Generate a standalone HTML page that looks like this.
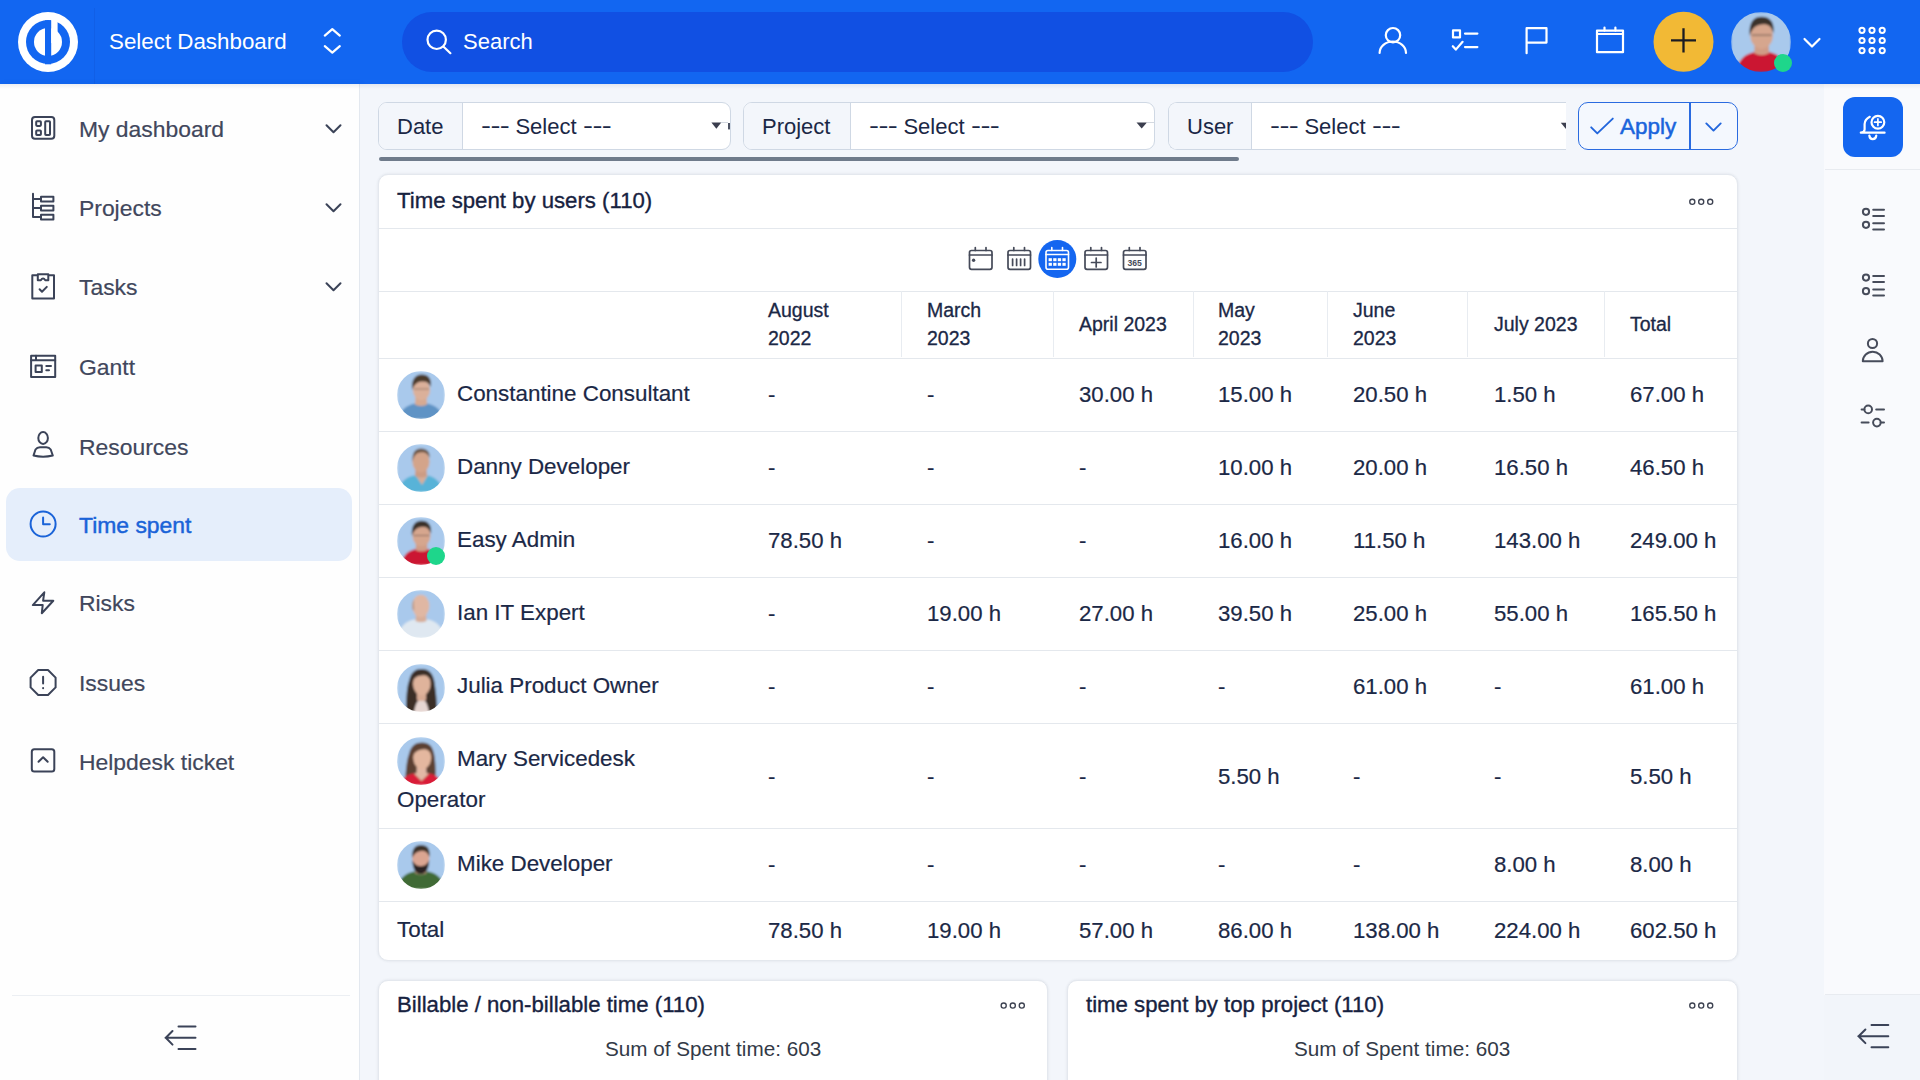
<!DOCTYPE html>
<html><head><meta charset="utf-8">
<style>
*{box-sizing:border-box;margin:0;padding:0}
html,body{width:1920px;height:1080px;overflow:hidden}
body{position:relative;font-family:"Liberation Sans",sans-serif;background:#f3f6fb;color:#1b2846}
.a{position:absolute}
.t{position:absolute;white-space:nowrap}
svg{position:absolute;overflow:visible}
/* header */
#hdr{left:0;top:0;width:1920px;height:84px;background:#1266f1}
/* sidebar */
#side{left:0;top:84px;width:360px;height:996px;background:#fefefe;border-right:1px solid #e3e8ef;box-shadow:2px 0 6px rgba(30,50,90,.07)}
.si{position:absolute;left:79px;font-size:22.9px;line-height:30px;height:30px;color:#41475c;-webkit-text-stroke:.2px #41475c}
#rside{left:1823px;top:84px;width:97px;height:996px;background:#f9fafd;border-left:1px solid #e2e6ed;box-shadow:-2px 0 5px rgba(30,50,90,.06)}
.ic{stroke:#3b4358;fill:none;stroke-width:2;stroke-linecap:round;stroke-linejoin:round}
.wi{stroke:#fff;fill:none;stroke-width:2.2;stroke-linecap:round;stroke-linejoin:round}
.card{position:absolute;background:#fff;border:1px solid #e4e8ee;border-radius:10px;box-shadow:0 0 3px rgba(30,45,70,.10)}
.hl{position:absolute;height:1px;margin-top:1px;background:#e4e8ed}
.th{position:absolute;margin-top:1px;font-size:19.5px;line-height:27.5px;color:#1b2846;-webkit-text-stroke:.3px #1b2846;white-space:nowrap}
.td{position:absolute;margin-top:1px;font-size:22.2px;line-height:30px;height:30px;color:#1b2846;-webkit-text-stroke:.2px #1b2846;white-space:nowrap}
.nm{position:absolute;left:457px;font-size:22.4px;line-height:30px;height:30px;color:#1b2846;-webkit-text-stroke:.2px #1b2846;white-space:nowrap}
.ttl{position:absolute;font-size:22.2px;line-height:30px;height:30px;color:#17223f;-webkit-text-stroke:.35px #17223f;white-space:nowrap}
</style></head><body>

<svg width="0" height="0" style="position:absolute">
<defs>
 <clipPath id="cc"><circle cx="24" cy="24" r="24"/></clipPath>
 <filter id="bl" x="-5%" y="-5%" width="110%" height="110%"><feGaussianBlur stdDeviation=".8"/></filter>
 <symbol id="av-con" viewBox="0 0 48 48"><g clip-path="url(#cc)"><g filter="url(#bl)">
  <rect width="48" height="48" fill="#a9c9ec"/>
  <path d="M2 48 C4 38 10 34 18 32.5 L30 32.5 C38 34 44 38 46 48Z" fill="#5e93c5"/>
  <path d="M18.5 24 L29.5 24 L30 33.5 Q24 36.5 18 33.5Z" fill="#d7aa92"/>
  <ellipse cx="24.5" cy="19" rx="8.6" ry="10.2" fill="#dbb09a"/>
  <path d="M15.2 19 C14 9 18 3.5 24.8 3.5 C31.5 3.5 35 8 33.8 16 C32 11.5 29 10 24.5 10.5 C20 11 17 13.5 15.2 19Z" fill="#4b3a2b"/>
  <path d="M17 18 H32" stroke="#5e4c40" stroke-width="1" opacity=".55"/>
 </g></g></symbol>
 <symbol id="av-dan" viewBox="0 0 48 48"><g clip-path="url(#cc)"><g filter="url(#bl)">
  <rect width="48" height="48" fill="#a9c9ec"/>
  <path d="M1 48 C3 38 9 33 17 31.5 L31 31.5 C38 33 44 38 46 48Z" fill="#58b3d8"/>
  <path d="M18.5 31 L25 41 L31 31Z" fill="#d5ae9a"/>
  <path d="M18.5 24 L29.5 24 L30 32 Q24 35 18 32Z" fill="#cc9c84"/>
  <ellipse cx="24" cy="17.5" rx="8.6" ry="11" fill="#d4a48a"/>
  <path d="M15.5 18 C15 8 18.5 4.5 24 4.5 C30 4.5 33 8 32.8 14 C30 8.5 27 8 23 8.5 C19 9 16.5 12 15.5 18Z" fill="#6a5444"/>
 </g></g></symbol>
 <symbol id="av-adm" viewBox="0 0 48 48"><g clip-path="url(#cc)"><g filter="url(#bl)">
  <rect width="48" height="48" fill="#a9c9ec"/>
  <path d="M4 48 C6 38 11 33.5 19 32 L30 32 C38 33.5 43 38 45 48Z" fill="#cb1430"/>
  <path d="M19 24 L30 24 L30.5 33 Q24.5 36 18.5 33Z" fill="#d09c86"/>
  <ellipse cx="24.5" cy="18.5" rx="9" ry="11" fill="#d6a68e"/>
  <path d="M15 19 C14 8.5 18 3.8 24.5 3.8 C31.5 3.8 35 8.5 34 17 C32 10.5 29 9.5 24.5 10 C20 10.5 16.5 13 15 19Z" fill="#3a302a"/>
  <path d="M16.5 18.5 H32.5" stroke="#504038" stroke-width="1" opacity=".6"/>
 </g></g></symbol>
 <symbol id="av-ian" viewBox="0 0 48 48"><g clip-path="url(#cc)"><g filter="url(#bl)">
  <rect width="48" height="48" fill="#a9c9ec"/>
  <path d="M0 48 C2 37 9 31 17 29.5 L31 29.5 C39 31 46 37 48 48Z" fill="#dfe8f1"/>
  <path d="M19 23 L29 23 L29.5 31 Q24 33.5 18.5 31Z" fill="#d7ae9a"/>
  <ellipse cx="23.8" cy="16" rx="8.6" ry="11.3" fill="#e0b7a3"/>
  <path d="M15.3 19 Q15 12 16.8 9 L17.2 21Z" fill="#b59888"/>
 </g></g></symbol>
 <symbol id="av-jul" viewBox="0 0 48 48"><g clip-path="url(#cc)"><g filter="url(#bl)">
  <rect width="48" height="48" fill="#a9c9ec"/>
  <path d="M9 48 C9 32 10 22 12 17 C14 8 18 5 24.5 5 C32 5 36 9 37.5 18 C39 28 40 36 40 48Z" fill="#3a2d27"/>
  <path d="M17 48 C19 38 21.5 35 24.5 35 C27.5 35 30 38 32 48Z" fill="#e6d6d2"/>
  <path d="M20 26 L29 26 L29 36 Q24.5 38 20 36Z" fill="#d8ab94"/>
  <ellipse cx="24.8" cy="20" rx="8.8" ry="11.2" fill="#dfb39b"/>
  <path d="M15.8 17 C17 9 20 7.5 25 7.5 C31 7.5 33 10 34 17 C31 11.5 28.5 11 24.5 11.5 C20 12 17.5 13.5 15.8 17Z" fill="#3a2d27"/>
 </g></g></symbol>
 <symbol id="av-mar" viewBox="0 0 48 48"><g clip-path="url(#cc)"><g filter="url(#bl)">
  <rect width="48" height="48" fill="#a9c9ec"/>
  <path d="M8 46 C9 30 10 22 12 17 C14 8 19 5.5 25 5.5 C32 5.5 36 9 37.5 19 C39 30 39 38 38 46Z" fill="#5b4133"/>
  <path d="M2 48 C6 40 11 37 17 36.5 L24.5 44 L32 36.5 C38 37 42 40 46 48Z" fill="#d91d37"/>
  <path d="M20 27 L29 27 L29.5 36 L32 36.5 L24.5 44 L17 36.5 L19.5 36Z" fill="#e2b8a5"/>
  <ellipse cx="25.2" cy="20.5" rx="9" ry="11.6" fill="#e4b79f"/>
  <path d="M16 19 C17 10 20 8.5 25.5 8.5 C32 8.5 34 11 35 19 C32 12.5 29 12 25 12.5 C20.5 13 18 15 16 19Z" fill="#5b4133"/>
 </g></g></symbol>
 <symbol id="av-mik" viewBox="0 0 48 48"><g clip-path="url(#cc)"><g filter="url(#bl)">
  <rect width="48" height="48" fill="#a9c9ec"/>
  <path d="M0 48 C2 37 9 32 17 30.5 L31 30.5 C39 32 46 37 48 48Z" fill="#3f6b36"/>
  <path d="M18.5 24 L29 24 L29.5 32 Q24 35 18 32Z" fill="#d3a08c"/>
  <ellipse cx="23.8" cy="17" rx="8.5" ry="10.2" fill="#dba591"/>
  <path d="M15.3 19 C16 31 20 33 23.8 33 C27.5 33 31.5 31 32.3 19 C30 24 27 25 23.8 25 C20.5 25 17.5 24 15.3 19Z" fill="#2b2420"/>
  <path d="M15.3 17 C14.5 7.5 18.5 4 24 4 C30 4 33.5 7.5 32.5 16 C30.5 10.5 27.5 9.5 24 10 C20 10.5 17 12.5 15.3 17Z" fill="#3c3027"/>
 </g></g></symbol>
</defs></svg>

<!-- HEADER -->
<div id="hdr" class="a"></div>
<!-- logo -->
<svg style="left:0;top:0" width="100" height="84" viewBox="0 0 100 84">
 <circle cx="48" cy="42" r="30" fill="#fff"/>
 <circle cx="48" cy="42" r="22" fill="#1266f1"/>
 <circle cx="48" cy="42" r="14" fill="#fff"/>
 <rect x="45" y="20.3" width="6.2" height="44" fill="#1266f1"/>
 <rect x="51.2" y="19" width="6.4" height="24" fill="#fff"/>
</svg>
<div class="a" style="left:94px;top:8px;width:1px;height:76px;background:rgba(10,40,140,.10)"></div>
<div class="t" style="left:109px;top:27px;font-size:22.35px;line-height:30px;color:#fff">Select Dashboard</div>
<svg style="left:320px;top:24px" width="26" height="34" viewBox="0 0 26 34">
 <path class="wi" d="M4.8 11.6 L12.3 5.2 L19.8 11.6 M4.8 22.2 L12.3 28.6 L19.8 22.2" stroke-width="1.8"/>
</svg>
<div class="a" style="left:402px;top:12px;width:911px;height:60px;border-radius:30px;background:#1150e3"></div>
<svg style="left:420px;top:24px" width="36" height="36" viewBox="0 0 36 36">
 <circle class="wi" cx="16.7" cy="15.8" r="9.2" stroke-width="1.7"/>
 <path class="wi" d="M23.6 22.7 L30.4 29.2" stroke-width="1.7"/>
</svg>
<div class="t" style="left:463px;top:27px;font-size:22px;line-height:30px;color:#fff">Search</div>

<!-- header right icons -->
<svg style="left:0;top:0" width="1920" height="84" viewBox="0 0 1920 84">
 <g class="wi" stroke-width="2.3">
  <circle cx="1393" cy="35.2" r="7.2"/>
  <path d="M1379.6 53 A13.2 11.5 0 0 1 1406 53"/>
  <rect x="1453" y="30.4" width="7" height="7"/>
  <path d="M1465 33.6 H1477.4 M1465 47.1 H1477.4 M1452.8 46.2 L1455.8 49.6 L1462.6 41.8"/>
  <path d="M1526.6 53.2 V28.2 H1546.5 V42.6 H1526.6"/>
  <rect x="1597" y="30.6" width="26" height="21.6"/>
  <path d="M1597 34 H1623 M1604.5 27.6 V30.6 M1615.4 27.6 V30.6"/>
 </g>
 <circle cx="1683.5" cy="41.8" r="30" fill="#f2b935"/>
 <path d="M1671 40.4 H1696 M1683.5 28.2 V52.6" stroke="#1c1c22" stroke-width="2.3" stroke-linecap="butt"/>
 <path class="wi" d="M1804.5 39 L1812 46.5 L1819.5 39" stroke-width="2"/>
 <g fill="none" stroke="#fff" stroke-width="2">
  <circle cx="1862" cy="30.3" r="2.6"/><circle cx="1872" cy="30.3" r="2.6"/><circle cx="1882.2" cy="30.3" r="2.6"/>
  <circle cx="1862" cy="40.5" r="2.6"/><circle cx="1872" cy="40.5" r="2.6"/><circle cx="1882.2" cy="40.5" r="2.6"/>
  <circle cx="1862" cy="50.6" r="2.6"/><circle cx="1872" cy="50.6" r="2.6"/><circle cx="1882.2" cy="50.6" r="2.6"/>
 </g>
</svg>
<!-- header avatar (Easy admin) -->
<svg style="left:1731px;top:12px" width="60" height="60" viewBox="0 0 48 48">
 <use href="#av-adm"/>
</svg>
<div class="a" style="left:1774px;top:54px;width:18px;height:18px;border-radius:50%;background:#1ed68b"></div>

<!-- SIDEBAR -->
<div id="side" class="a"></div>
<div class="a" style="left:6px;top:488px;width:346px;height:73px;border-radius:14px;background:#e5eefb"></div>
<div class="si" style="top:114px">My dashboard</div>
<div class="si" style="top:193px">Projects</div>
<div class="si" style="top:272px">Tasks</div>
<div class="si" style="top:352px">Gantt</div>
<div class="si" style="top:432px">Resources</div>
<div class="si" style="top:510px;color:#1a63d8;-webkit-text-stroke:.45px #1a63d8">Time spent</div>
<div class="si" style="top:588px">Risks</div>
<div class="si" style="top:668px">Issues</div>
<div class="si" style="top:747px">Helpdesk ticket</div>
<svg style="left:0;top:0" width="360" height="1080" viewBox="0 0 360 1080">
 <g class="ic" stroke-width="1.9">
  <!-- dashboard -->
  <rect x="32" y="117" width="22.3" height="21.8" rx="3"/>
  <rect x="36.2" y="121.2" width="4.7" height="4.7" rx=".8"/>
  <rect x="36.2" y="130.4" width="4.7" height="4.7" rx=".8"/>
  <rect x="45.2" y="121.2" width="4.8" height="13.9" rx=".8"/>
  <path d="M326.5 125.2 L333.5 132.2 L340.5 125.2"/>
  <!-- projects -->
  <path d="M33 193.8 V217 H40.5 M33 199 H40.5 M33 208 H40.5"/>
  <rect x="41" y="196.7" width="12.4" height="4.8"/>
  <rect x="41" y="205.7" width="12.4" height="4.8"/>
  <rect x="41" y="214.8" width="12.4" height="4.8"/>
  <path d="M326.5 204.2 L333.5 211.2 L340.5 204.2"/>
  <!-- tasks -->
  <path d="M37.5 275.3 H32.3 V298.5 H54 V275.3 H48.6 M37.8 274.3 H48.3 V280.3 H45.3 Q43 276.5 40.8 280.3 H37.8Z"/>
  <path d="M39.6 289.3 L42 291.7 L46.8 286.9"/>
  <path d="M326.5 283.2 L333.5 290.2 L340.5 283.2"/>
  <!-- gantt -->
  <rect x="31.1" y="355.8" width="24.1" height="21.3"/>
  <path d="M31.1 360.2 H55.2 M36 355.8 V360.2"/>
  <rect x="35.6" y="365.6" width="6.2" height="6.4"/>
  <path d="M46.3 366 H51 M46.3 370.2 H49"/>
  <!-- resources -->
  <ellipse cx="43.1" cy="438" rx="4.8" ry="5.9"/>
  <path d="M33.5 455.5 L35.5 449.5 Q37 447.3 40 447.2 H46.3 Q49.2 447.3 50.7 449.5 L52.8 455.5 Q43 457.8 33.5 455.5Z"/>
  <!-- risks -->
  <path d="M44.3 592.3 L32.8 605.1 H42.7 L41.8 613.2 L53.3 600.7 H43.1Z"/>
  <!-- issues -->
  <path d="M38.2 670 H48 L55.6 677.6 V687.4 L48 695 H38.2 L30.6 687.4 V677.6Z"/>
  <path d="M43.1 676.7 V683.6 M43.1 688 V688.3"/>
  <!-- helpdesk -->
  <rect x="31.8" y="749.2" width="22.5" height="22.4" rx="2.5"/>
  <path d="M38.5 761.8 L43.1 757.2 L47.7 761.8"/>
 </g>
 <g class="ic" stroke-width="2.1" style="stroke:#1a63d8">
  <circle cx="43.1" cy="524" r="12.5"/>
  <path d="M43.1 517.5 V524.3 H49.8"/>
 </g>
 <path d="M12 995.5 H350" stroke="#eceff3" stroke-width="1"/>
 <g class="ic" stroke-width="2">
  <path d="M165.5 1037.8 H195.5 M178.5 1026.5 H195.5 M178.5 1049 H195.5 M172.5 1031 L165.8 1037.8 L172.5 1044.6"/>
 </g>
</svg>
<!-- RIGHT SIDEBAR -->
<div id="rside" class="a"></div>
<div class="a" style="left:1824px;top:995px;width:96px;height:85px;background:#f2f5fa"></div>
<div class="a" style="left:1843px;top:97px;width:60px;height:60px;border-radius:12px;background:#1466f0"></div>
<svg style="left:0;top:0" width="1920" height="1080" viewBox="0 0 1920 1080">
 <g class="wi" stroke-width="1.45">
  <path d="M1869.8 116.8 Q1864.8 119.5 1864.6 124 V129.5 Q1864.4 132.5 1860.8 132.7 H1884.6"/>
  <path d="M1869.3 135.5 Q1869.8 139.2 1872.7 139.2 Q1875.8 139.2 1876.3 135.5"/>
  <circle cx="1877.9" cy="122.2" r="6.4"/>
  <path d="M1874.6 122.2 H1881.2 M1877.9 118.9 V125.5" stroke-width="1.7"/>
 </g>
 <path d="M1825 169.5 H1920" stroke="#e8ebf0" stroke-width="1"/>
 <g class="ic" stroke-width="1.5" style="stroke:#474c5b">
  <circle cx="1866" cy="211.8" r="3.1"/><circle cx="1866" cy="224.8" r="3.1"/>
  <path d="M1873.2 209.8 H1884 M1873.2 215.9 H1884 M1873.2 223.3 H1884 M1873.2 229.4 H1884"/>
  <circle cx="1866" cy="277.6" r="3.1"/><circle cx="1866" cy="291.2" r="3.1"/>
  <path d="M1873.2 275.9 H1884 M1873.2 281.9 H1884 M1873.2 289.4 H1884 M1873.2 295.4 H1884"/>
  <circle cx="1872.5" cy="343.5" r="4.6"/>
  <path d="M1862.8 361.3 A9.9 9.6 0 0 1 1882.6 361.3Z"/>
  <circle cx="1868.2" cy="409.4" r="3.8"/><circle cx="1876.9" cy="422.6" r="3.8"/>
  <path d="M1861.6 409.4 H1864.4 M1876.2 409.4 H1884 M1861.6 422.6 H1868.6 M1880.7 422.6 H1884"/>
 </g>
 <path d="M1825 994.5 H1920" stroke="#e8ebf0" stroke-width="1"/>
 <g class="ic" stroke-width="2">
  <path d="M1858.3 1036.3 H1888.3 M1871.5 1025 H1888.3 M1871.5 1047.2 H1888.3 M1865.4 1029.5 L1858.6 1036.3 L1865.4 1043.1"/>
 </g>
</svg>


<!-- FILTER BAR -->
<div class="a" style="left:360px;top:84px;width:1464px;height:996px;background:#f3f6fb"></div>
<style>
.fg{position:absolute;top:102px;height:48px;border:1px solid #cfd8e4;border-radius:9px;background:#fff;overflow:hidden}
.fl{position:absolute;left:0;top:0;height:46px;background:#f3f6fb;border-right:1px solid #cfd8e4}
.ft{position:absolute;font-size:22px;line-height:30px;top:9px;color:#1b2846;white-space:nowrap}
.dd{display:inline-block;letter-spacing:-0.4px;transform:scaleX(1.36) translateY(-1px);transform-origin:0 50%}
.dd1{margin-right:7.5px}
.sel{position:absolute;font-size:22px;line-height:30px;top:9px;color:#1b2846;white-space:nowrap}
</style>
<div class="fg" style="left:378px;width:353px">
 <div class="fl" style="width:84px"></div>
 <div class="ft" style="left:18px">Date</div>
 <div class="sel" style="left:102px"><span class="dd dd1">---</span> Select <span class="dd">---</span></div>
</div>
<div class="fg" style="left:743px;width:412px">
 <div class="fl" style="width:107px"></div>
 <div class="ft" style="left:18px">Project</div>
 <div class="sel" style="left:125px"><span class="dd dd1">---</span> Select <span class="dd">---</span></div>
</div>
<div class="fg" style="left:1168px;width:398px;border-right:none;border-radius:9px 0 0 9px">
 <div class="fl" style="width:83px"></div>
 <div class="ft" style="left:18px">User</div>
 <div class="sel" style="left:101px"><span class="dd dd1">---</span> Select <span class="dd">---</span></div>
</div>
<svg style="left:0;top:0" width="1920" height="200" viewBox="0 0 1920 200">
 <path d="M711.4 122.4 H721.3 L716.35 128.8Z" fill="#3b3e4e"/>
 <path d="M721 122.5 H728" stroke="#c9cfd9" stroke-width=".8"/>
 <rect x="728" y="123" width="2" height="6.4" fill="#4d5363"/>
 <path d="M1136.5 122.4 H1146.9 L1141.7 128.6Z" fill="#3b3e4e"/>
 <path d="M1147 122.5 H1154" stroke="#c9cfd9" stroke-width=".8"/>
 <path d="M1560.8 122.8 H1566 V129Z" fill="#3b3e4e"/>
</svg>
<div class="a" style="left:379px;top:157px;width:860px;height:4px;border-radius:2px;background:#6f7b8b"></div>
<!-- Apply -->
<div class="a" style="left:1578px;top:102px;width:160px;height:48px;border:1.5px solid #2a6be0;border-radius:10px;background:#f4f8fe"></div>
<div class="a" style="left:1688.5px;top:102px;width:2.6px;height:48px;background:#2a6be0"></div>
<svg style="left:0;top:0" width="1920" height="200" viewBox="0 0 1920 200">
 <path d="M1591.2 127.3 L1597.3 133.4 L1612.8 118.6" fill="none" stroke="#2266dc" stroke-width="1.9" stroke-linecap="round" stroke-linejoin="round"/>
 <path d="M1706.3 123.4 L1713.5 130.6 L1720.7 123.4" fill="none" stroke="#2266dc" stroke-width="1.9" stroke-linecap="round" stroke-linejoin="round"/>
</svg>
<div class="t" style="left:1620px;top:112px;font-size:22.5px;line-height:30px;color:#1a64dc;-webkit-text-stroke:.5px #1a64dc">Apply</div>

<!-- MAIN CARD -->
<div class="card" style="left:378px;top:174px;width:1360px;height:787px"></div>
<div class="card" style="left:378px;top:980px;width:670px;height:130px"></div>
<div class="card" style="left:1067px;top:980px;width:671px;height:130px"></div>

<div class="ttl" style="left:397px;top:186px">Time spent by users (110)</div>
<svg style="left:0;top:0" width="1920" height="1080" viewBox="0 0 1920 1080">
 <g fill="none" stroke="#3d4251" stroke-width="1.35">
  <circle cx="1692.3" cy="201.8" r="2.55"/><circle cx="1701.2" cy="201.8" r="2.55"/><circle cx="1710.2" cy="201.8" r="2.55"/>
  <circle cx="1003.7" cy="1005.5" r="2.55"/><circle cx="1012.8" cy="1005.5" r="2.55"/><circle cx="1021.8" cy="1005.5" r="2.55"/>
  <circle cx="1692.3" cy="1005.5" r="2.55"/><circle cx="1701.2" cy="1005.5" r="2.55"/><circle cx="1710.2" cy="1005.5" r="2.55"/>
 </g>
</svg>
<div class="hl" style="left:379px;top:227px;width:1358px"></div>
<div class="hl" style="left:379px;top:290px;width:1358px"></div>
<div class="hl" style="left:379px;top:357px;width:1358px"></div>
<div class="hl" style="left:379px;top:430px;width:1358px"></div>
<div class="hl" style="left:379px;top:503px;width:1358px"></div>
<div class="hl" style="left:379px;top:576px;width:1358px"></div>
<div class="hl" style="left:379px;top:649px;width:1358px"></div>
<div class="hl" style="left:379px;top:722px;width:1358px"></div>
<div class="hl" style="left:379px;top:827px;width:1358px"></div>
<div class="hl" style="left:379px;top:900px;width:1358px"></div>
<!-- header col separators -->
<div class="a" style="left:901px;top:291px;width:1px;height:66px;background:#e8ecf1"></div>
<div class="a" style="left:1053px;top:291px;width:1px;height:66px;background:#e8ecf1"></div>
<div class="a" style="left:1193px;top:291px;width:1px;height:66px;background:#e8ecf1"></div>
<div class="a" style="left:1327px;top:291px;width:1px;height:66px;background:#e8ecf1"></div>
<div class="a" style="left:1467px;top:291px;width:1px;height:66px;background:#e8ecf1"></div>
<div class="a" style="left:1604px;top:291px;width:1px;height:66px;background:#e8ecf1"></div>

<svg style="left:0;top:0" width="1920" height="1080" viewBox="0 0 1920 1080">
 <circle cx="1057.3" cy="259" r="19" fill="#1466f0"/>
 <g fill="none" stroke="#454a59" stroke-width="1.7" stroke-linejoin="round" stroke-linecap="round">
  <rect x="969.5" y="250.5" width="22.5" height="18.8" rx="2"/><path d="M969.5 255 H992 M975.3 247.5 V250.5 M986 247.5 V250.5"/>
  <rect x="1008" y="250.5" width="22.5" height="18.8" rx="2"/><path d="M1008 255 H1030.5 M1013.8 247.5 V250.5 M1024.5 247.5 V250.5 M1012.6 259 V265.5 M1016.6 259 V265.5 M1020.6 259 V265.5 M1024.6 259 V265.5"/>
  <rect x="1085" y="250.5" width="22.5" height="18.8" rx="2"/><path d="M1085 255 H1107.5 M1090.8 247.5 V250.5 M1101.5 247.5 V250.5 M1091.5 262.5 H1101 M1096.2 258 V267"/>
  <rect x="1123.5" y="250.5" width="22.5" height="18.8" rx="2"/><path d="M1123.5 255 H1146 M1129.3 247.5 V250.5 M1140 247.5 V250.5"/>
 </g>
 <circle cx="973.6" cy="260.2" r="1.7" fill="#454a59"/>
 <text x="1134.7" y="265.8" font-family="Liberation Sans" font-size="8.6" font-weight="bold" fill="#454a59" text-anchor="middle">365</text>
 <g fill="none" stroke="#fff" stroke-width="1.6" stroke-linejoin="round" stroke-linecap="round">
  <rect x="1046" y="250.5" width="22.5" height="18.8" rx="2"/><path d="M1046 254.5 H1068.5 M1051.8 247.5 V250.5 M1062.5 247.5 V250.5"/>
 </g>
 <g fill="#fff">
  <rect x="1048.6" y="258.2" width="3.3" height="3"/><rect x="1053.2" y="258.2" width="3.3" height="3"/><rect x="1057.8" y="258.2" width="3.3" height="3"/><rect x="1062.4" y="258.2" width="3.3" height="3"/>
  <rect x="1048.6" y="262.8" width="3.3" height="3"/><rect x="1053.2" y="262.8" width="3.3" height="3"/><rect x="1057.8" y="262.8" width="3.3" height="3"/><rect x="1062.4" y="262.8" width="3.3" height="3"/>
 </g>
</svg>
<div class="th" style="left:768px;top:296.25px">August</div>
<div class="th" style="left:768px;top:323.75px">2022</div>
<div class="th" style="left:927px;top:296.25px">March</div>
<div class="th" style="left:927px;top:323.75px">2023</div>
<div class="th" style="left:1079px;top:310.25px">April 2023</div>
<div class="th" style="left:1218px;top:296.25px">May</div>
<div class="th" style="left:1218px;top:323.75px">2023</div>
<div class="th" style="left:1353px;top:296.25px">June</div>
<div class="th" style="left:1353px;top:323.75px">2023</div>
<div class="th" style="left:1494px;top:310.25px">July 2023</div>
<div class="th" style="left:1630px;top:310.25px">Total</div>
<svg style="left:397px;top:370.8px" width="48" height="48" viewBox="0 0 48 48"><use href="#av-con"/></svg>
<div class="nm" style="top:379px">Constantine Consultant</div>
<div class="td" style="left:768px;top:379px">-</div>
<div class="td" style="left:927px;top:379px">-</div>
<div class="td" style="left:1079px;top:379px">30.00 h</div>
<div class="td" style="left:1218px;top:379px">15.00 h</div>
<div class="td" style="left:1353px;top:379px">20.50 h</div>
<div class="td" style="left:1494px;top:379px">1.50 h</div>
<div class="td" style="left:1630px;top:379px">67.00 h</div>
<svg style="left:397px;top:443.8px" width="48" height="48" viewBox="0 0 48 48"><use href="#av-dan"/></svg>
<div class="nm" style="top:452px">Danny Developer</div>
<div class="td" style="left:768px;top:452px">-</div>
<div class="td" style="left:927px;top:452px">-</div>
<div class="td" style="left:1079px;top:452px">-</div>
<div class="td" style="left:1218px;top:452px">10.00 h</div>
<div class="td" style="left:1353px;top:452px">20.00 h</div>
<div class="td" style="left:1494px;top:452px">16.50 h</div>
<div class="td" style="left:1630px;top:452px">46.50 h</div>
<svg style="left:397px;top:517px" width="48" height="48" viewBox="0 0 48 48"><use href="#av-adm"/></svg>
<div class="nm" style="top:525px">Easy Admin</div>
<div class="td" style="left:768px;top:525px">78.50 h</div>
<div class="td" style="left:927px;top:525px">-</div>
<div class="td" style="left:1079px;top:525px">-</div>
<div class="td" style="left:1218px;top:525px">16.00 h</div>
<div class="td" style="left:1353px;top:525px">11.50 h</div>
<div class="td" style="left:1494px;top:525px">143.00 h</div>
<div class="td" style="left:1630px;top:525px">249.00 h</div>
<svg style="left:397px;top:590px" width="48" height="48" viewBox="0 0 48 48"><use href="#av-ian"/></svg>
<div class="nm" style="top:598px">Ian IT Expert</div>
<div class="td" style="left:768px;top:598px">-</div>
<div class="td" style="left:927px;top:598px">19.00 h</div>
<div class="td" style="left:1079px;top:598px">27.00 h</div>
<div class="td" style="left:1218px;top:598px">39.50 h</div>
<div class="td" style="left:1353px;top:598px">25.00 h</div>
<div class="td" style="left:1494px;top:598px">55.00 h</div>
<div class="td" style="left:1630px;top:598px">165.50 h</div>
<svg style="left:397px;top:663.7px" width="48" height="48" viewBox="0 0 48 48"><use href="#av-jul"/></svg>
<div class="nm" style="top:671px">Julia Product Owner</div>
<div class="td" style="left:768px;top:671px">-</div>
<div class="td" style="left:927px;top:671px">-</div>
<div class="td" style="left:1079px;top:671px">-</div>
<div class="td" style="left:1218px;top:671px">-</div>
<div class="td" style="left:1353px;top:671px">61.00 h</div>
<div class="td" style="left:1494px;top:671px">-</div>
<div class="td" style="left:1630px;top:671px">61.00 h</div>
<svg style="left:397px;top:736.7px" width="48" height="48" viewBox="0 0 48 48"><use href="#av-mar"/></svg>
<div class="nm" style="top:744px">Mary Servicedesk</div>
<div class="nm" style="left:397px;top:785px">Operator</div>
<div class="td" style="left:768px;top:761px">-</div>
<div class="td" style="left:927px;top:761px">-</div>
<div class="td" style="left:1079px;top:761px">-</div>
<div class="td" style="left:1218px;top:761px">5.50 h</div>
<div class="td" style="left:1353px;top:761px">-</div>
<div class="td" style="left:1494px;top:761px">-</div>
<div class="td" style="left:1630px;top:761px">5.50 h</div>
<svg style="left:397px;top:841px" width="48" height="48" viewBox="0 0 48 48"><use href="#av-mik"/></svg>
<div class="nm" style="top:849px">Mike Developer</div>
<div class="td" style="left:768px;top:849px">-</div>
<div class="td" style="left:927px;top:849px">-</div>
<div class="td" style="left:1079px;top:849px">-</div>
<div class="td" style="left:1218px;top:849px">-</div>
<div class="td" style="left:1353px;top:849px">-</div>
<div class="td" style="left:1494px;top:849px">8.00 h</div>
<div class="td" style="left:1630px;top:849px">8.00 h</div>
<div class="a" style="left:427px;top:547px;width:18px;height:18px;border-radius:50%;background:#1ed68b"></div>
<div class="nm" style="left:397px;top:915px">Total</div>
<div class="td" style="left:768px;top:915px">78.50 h</div>
<div class="td" style="left:927px;top:915px">19.00 h</div>
<div class="td" style="left:1079px;top:915px">57.00 h</div>
<div class="td" style="left:1218px;top:915px">86.00 h</div>
<div class="td" style="left:1353px;top:915px">138.00 h</div>
<div class="td" style="left:1494px;top:915px">224.00 h</div>
<div class="td" style="left:1630px;top:915px">602.50 h</div>

<div class="ttl" style="left:397px;top:990px">Billable / non-billable time (110)</div>
<div class="ttl" style="left:1086px;top:990px">time spent by top project (110)</div>
<div class="t" style="left:605px;top:1034px;font-size:20.7px;line-height:30px;color:#333a47">Sum of Spent time: 603</div>
<div class="t" style="left:1294px;top:1034px;font-size:20.7px;line-height:30px;color:#333a47">Sum of Spent time: 603</div>

<div class="a" style="left:0;top:84px;width:1920px;height:5px;background:linear-gradient(rgba(20,40,80,.07),rgba(20,40,80,0))"></div>
</body></html>
